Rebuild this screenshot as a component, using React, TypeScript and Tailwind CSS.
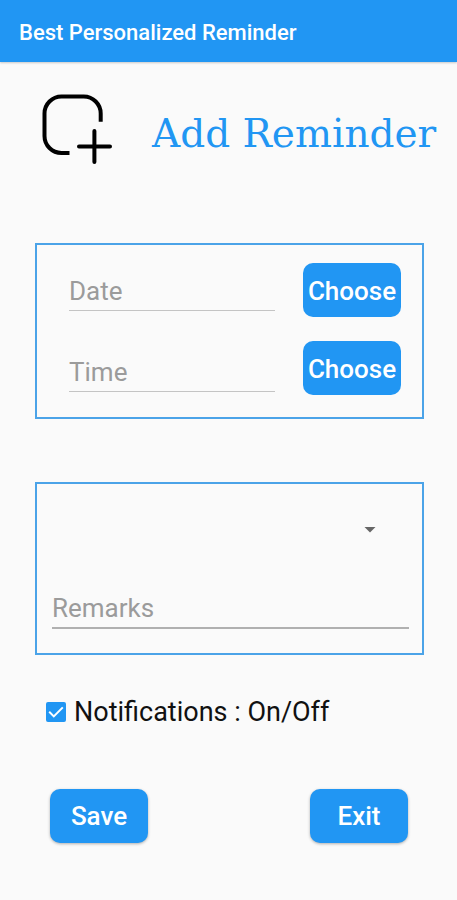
import { useState } from 'react'
import type { ReactNode } from 'react'

type FieldProps = {
  label: string
  value: string
  onChange: (value: string) => void
  lineClass: string
}

// Underlined text box with its label shown as the hint
const Field = ({ label, value, onChange, lineClass }: FieldProps) => (
  <input
    type="text"
    aria-label={label}
    placeholder={label}
    value={value}
    onChange={(e) => onChange(e.target.value)}
    className={`block h-12 w-full rounded-none bg-transparent pt-2 text-[26px] text-black outline-none placeholder:text-[#9b9b9b] ${lineClass}`}
  />
)

type ActionButtonProps = {
  children: ReactNode
  label?: string
  raised?: boolean
}

const ActionButton = ({ children, label, raised }: ActionButtonProps) => (
  <button
    type="button"
    aria-label={label}
    className={`h-[54px] w-[98px] rounded-[10px] bg-[#2196f3] pt-0.5 text-[26px] font-medium text-white ${raised ? 'shadow-[0_1px_3px_rgba(0,0,0,0.3)]' : ''}`}
  >
    {children}
  </button>
)

const AddIcon = () => (
  <svg className="size-[70px] shrink-0" viewBox="0 0 70 70" fill="none" stroke="black" strokeWidth="4" aria-hidden="true">
    <path d="M58.7 27.7V19.5a17 17 0 0 0-17-17H19.5a17 17 0 0 0-17 17V42a17 17 0 0 0 17 17h8" />
    <path d="M52.4 37v31M37 52.4h31" strokeLinecap="round" />
  </svg>
)

export default function App() {
  const [date, setDate] = useState('')
  const [time, setTime] = useState('')
  const [category, setCategory] = useState('')
  const [remarks, setRemarks] = useState('')
  const [notify, setNotify] = useState(true)

  return (
    <div className="min-h-screen bg-[#fafafa] font-['Roboto',sans-serif]">
      <header className="flex h-[62px] items-center bg-[#2196f3] px-[19px] pt-0.5 shadow-[0_1px_2px_rgba(0,0,0,0.2)]">
        <p className="text-[22px] font-medium text-white">Best Personalized Reminder</p>
      </header>

      <main className="pt-8 pb-14">
        <div className="flex items-center gap-10 pr-4 pl-[42px]">
          <AddIcon />
          <h1 className="pt-2.5 font-['DejaVu_Serif',serif] text-[39px] whitespace-nowrap text-[#2196f3]">
            Add Reminder
          </h1>
        </div>

        <form onSubmit={(e) => e.preventDefault()} className="pr-[33px] pl-[35px]">
          {/* Date and time */}
          <section className="mt-[79px] flex gap-7 border-2 border-[#4ba3e8] pt-[18px] pr-[21px] pb-[22px] pl-8">
            <div className="flex min-w-0 flex-1 flex-col gap-[33px]">
              <Field label="Date" value={date} onChange={setDate} lineClass="border-b border-[#c4c4c4]" />
              <Field label="Time" value={time} onChange={setTime} lineClass="border-b border-[#c4c4c4]" />
            </div>
            <div className="flex flex-col gap-6">
              <ActionButton label="Choose date">Choose</ActionButton>
              <ActionButton label="Choose time">Choose</ActionButton>
            </div>
          </section>

          {/* Category and remarks */}
          <section className="mt-[63px] border-2 border-[#4ba3e8] pt-5 pr-[13px] pb-6 pl-[15px]">
            <div className="relative mb-[25px]">
              <select
                aria-label="Category"
                value={category}
                onChange={(e) => setCategory(e.target.value)}
                className="block h-[52px] w-full appearance-none bg-transparent text-[26px] outline-none"
              >
                <option value=""></option>
              </select>
              <svg
                className="pointer-events-none absolute top-1/2 right-[33px] h-[6px] w-3 -translate-y-1/2"
                viewBox="0 0 12 6"
                fill="#666666"
                aria-hidden="true"
              >
                <path d="M0.5 0h11L6 5.5z" />
              </svg>
            </div>
            <Field label="Remarks" value={remarks} onChange={setRemarks} lineClass="border-b-2 border-[#b0b0b0]" />
          </section>

          <label className="mt-[37px] flex items-center gap-2 pl-[11px] text-[27px] text-[#111111]">
            <span className="relative size-5">
              <input
                type="checkbox"
                checked={notify}
                onChange={(e) => setNotify(e.target.checked)}
                className="peer block size-5 appearance-none rounded-[2px] border-2 border-[#757575] checked:border-[#2196f3] checked:bg-[#2196f3]"
              />
              <svg
                className="pointer-events-none absolute inset-0 hidden size-5 peer-checked:block"
                viewBox="0 0 20 20"
                fill="none"
                stroke="white"
                strokeWidth="2"
                aria-hidden="true"
              >
                <path d="M3.2 9.8l4.6 4.6 9-9" />
              </svg>
            </span>
            Notifications : On/Off
          </label>

          <div className="mt-14 flex justify-between pr-4 pl-[15px]">
            <ActionButton raised>Save</ActionButton>
            <ActionButton raised>Exit</ActionButton>
          </div>
        </form>
      </main>
    </div>
  )
}
